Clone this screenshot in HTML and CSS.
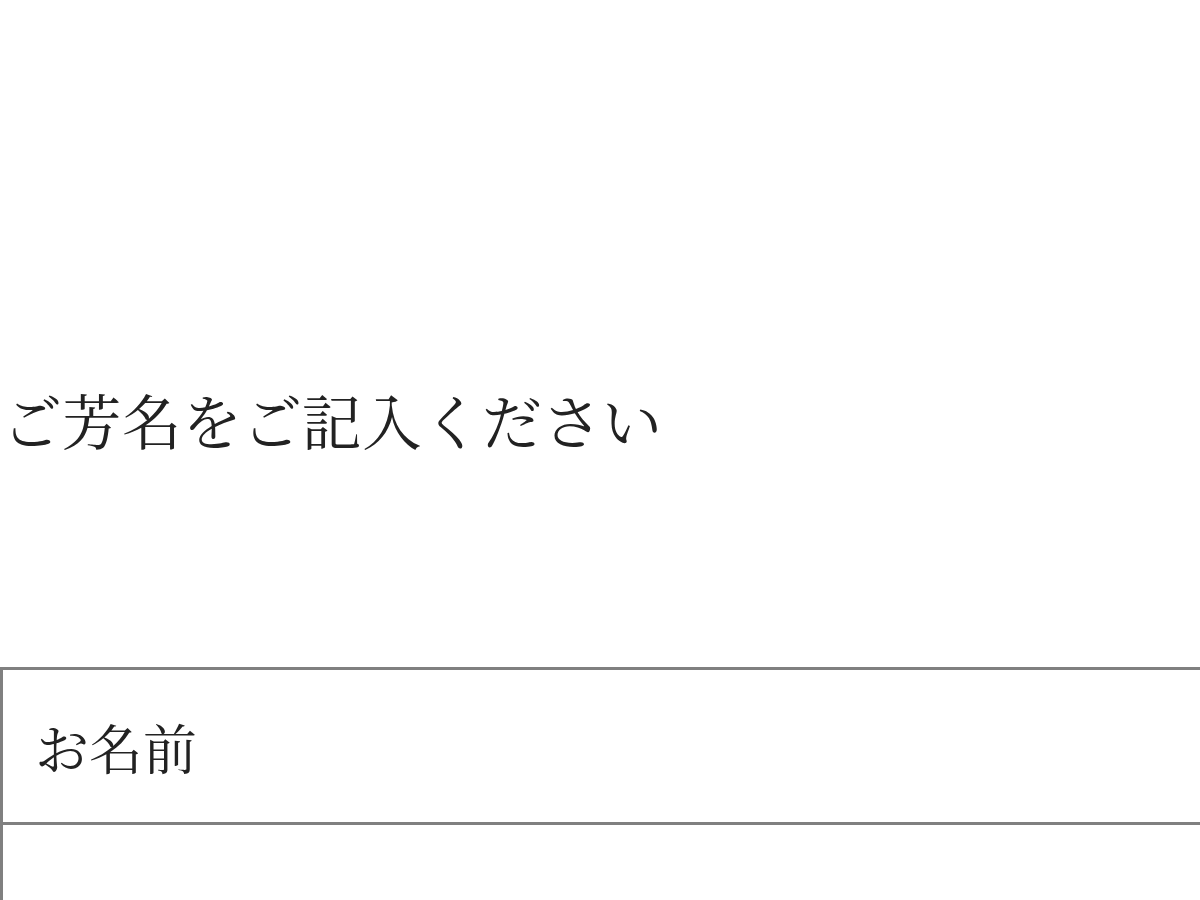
FILE: index.html
```html
<!DOCTYPE html>
<html lang="ja">
<head>
<meta charset="utf-8">
<link rel="stylesheet" href="styles.css">
</head>
<body>
<h1 class="title">ご芳名をご記入ください</h1>
<table class="form">
<tr><td class="label">お名前</td></tr>
<tr><td class="field"></td></tr>
</table>
</body>
</html>
```
FILE: styles.css
```css
html, body {
  margin: 0;
  padding: 0;
  background: #fff;
}
body {
  font-family: "Noto Serif CJK JP", "Liberation Serif", serif;
  color: #222;
}
.title {
  font-weight: normal;
  font-size: 60px;
  line-height: 1;
  margin: 389px 0 0 2px;
}
.form {
  margin-top: 218px;
  width: 1210px;
  border-collapse: collapse;
}
.form td {
  border: 3px solid #808080;
  font-size: 54px;
  padding: 0 0 0 32px;
}
.label {
  height: 152px;
}
.field {
  height: 152px;
}
```
